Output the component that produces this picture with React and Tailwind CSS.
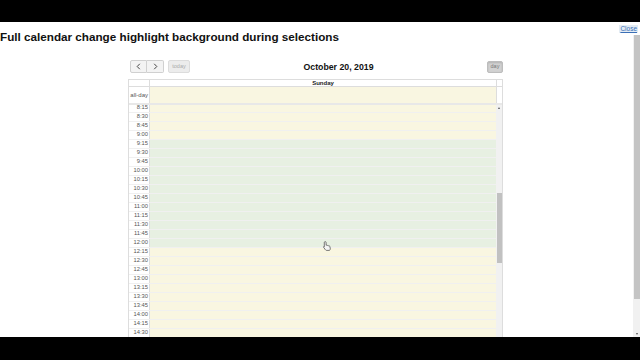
import React from "react";

const slots = Array.from({ length: 26 }, (_, i) => {
  const m = 8 * 60 + 15 + 15 * i;
  const h = Math.floor(m / 60);
  const mm = m % 60;
  return { label: `${h}:${String(mm).padStart(2, "0")}`, green: i >= 4 && i <= 15, first: i === 0 };
});

function Chevron({ dir }) {
  return (
    <svg width="5" height="7" viewBox="0 0 5 7" className="block">
      <path
        d={dir === "left" ? "M3.8 0.8 L1.2 3.5 L3.8 6.2" : "M1.2 0.8 L3.8 3.5 L1.2 6.2"}
        fill="none"
        stroke="#333"
        strokeWidth="0.9"
      />
    </svg>
  );
}

function Hand() {
  return (
    <svg width="8" height="10" viewBox="0 0 8 10">
      <path
        d="M2.2 0.6 C2.8 0.6 3.1 1 3.1 1.5 L3.1 4.3 L3.6 4.1 C4 4 4.4 4.2 4.5 4.5 C4.9 4.3 5.4 4.4 5.6 4.8 C6 4.6 6.6 4.8 6.8 5.3 L7.3 7.6 C7.4 8.4 7 9.4 6 9.4 L3.6 9.4 C3 9.4 2.6 9 2.2 8.5 L0.7 6.4 C0.4 6 0.5 5.4 1 5.3 C1.3 5.2 1.6 5.4 1.3 5.6 L1.3 1.5 C1.3 1 1.6 0.6 2.2 0.6 Z"
        fill="#f4f4f4"
        stroke="#444"
        strokeWidth="0.7"
      />
    </svg>
  );
}

export default function App() {
  return (
    <div className="w-[640px] h-[360px] flex flex-col bg-black overflow-hidden font-['Liberation_Sans',Arial,sans-serif]">
      <div className="h-[22px] shrink-0 bg-black" />
      <div className="h-[315px] shrink-0 bg-white flex flex-col overflow-hidden">
        <div className="h-[13px] shrink-0 flex justify-end items-start pt-[3px] pr-[2px]">
          <span className="text-[6.5px] leading-[8px] text-[#3b6fb6] underline bg-[#e3ecf4] px-[1px]">Close</span>
        </div>
        <div className="flex-1 flex flex-row min-h-0">
          <div className="flex-1 flex flex-col min-w-0">
            <h1 className="-mt-[5px] text-[11.7px] leading-[14px] font-bold text-[#111] whitespace-nowrap">
              Full calendar change highlight background during selections
            </h1>
            <div className="ml-[128px] w-[375px] mt-[16px] flex flex-col flex-1 min-h-0">
              {/* toolbar */}
              <div className="h-[13px] shrink-0 flex justify-between items-center">
                <div className="flex items-center gap-[4px] pl-[2px]">
                  <div className="flex">
                    <div className="w-[17px] h-[13px] flex items-center justify-center bg-[#f3f3f3] border border-[#d0d0d0] rounded-l-[2px]">
                      <Chevron dir="left" />
                    </div>
                    <div className="w-[17px] h-[13px] flex items-center justify-center bg-[#f3f3f3] border border-l-0 border-[#d0d0d0] rounded-r-[2px]">
                      <Chevron dir="right" />
                    </div>
                  </div>
                  <div className="w-[22px] h-[13px] flex items-center justify-center bg-[#ececec] border border-[#dcdcdc] rounded-[2px] text-[5.5px] text-[#aaa]">
                    today
                  </div>
                </div>
                <div className="text-[8.75px] font-bold text-[#111] leading-[10px]">October 20, 2019</div>
                <div className="w-[16px] h-[12px] flex items-center justify-center bg-[#d2d2d2] border border-[#bdbdbd] rounded-[2px] text-[5.5px] text-[#777] shadow-[inset_0_1px_2px_rgba(0,0,0,0.15)]">
                  day
                </div>
              </div>
              {/* header */}
              <div className="mt-[6px] h-[7px] shrink-0 flex border-t border-x border-[#ddd]">
                <div className="w-[21px] border-r border-[#ddd]" />
                <div className="flex-1 text-center text-[6px] leading-[6px] font-bold text-[#222]">Sunday</div>
                <div className="w-[6px] border-l border-[#ddd]" />
              </div>
              {/* all-day */}
              <div className="h-[17px] shrink-0 flex border-t border-x border-[#ddd]">
                <div className="w-[21px] border-r border-[#ddd] flex items-center justify-end pr-[1px] text-[6px] text-[#555]">
                  all-day
                </div>
                <div className="flex-1 bg-[#f9f6e1]" />
                <div className="w-[6px] border-l border-[#ddd]" />
              </div>
              {/* divider */}
              <div className="h-[2px] shrink-0 bg-[#e8e8e8] border-x border-[#ddd]" />
              {/* time grid */}
              <div className="flex-1 min-h-0 flex border-x border-[#ddd] relative">
                <div className="flex-1 min-w-0 flex flex-col">
                  {slots.map((s) => (
                    <div
                      key={s.label}
                      className={`${s.first ? "h-[7.5px]" : "h-[9px]"} shrink-0 flex border-b border-black/[0.06]`}
                    >
                      <div className="w-[21px] border-r border-[#ddd] flex items-end justify-end pr-[1px]">
                        <span className="text-[5.8px] leading-[9px] text-[#555] shrink-0">{s.label}</span>
                      </div>
                      <div className={`flex-1 ${s.green ? "bg-[#e7f0e2]" : "bg-[#f9f6e1]"}`} />
                    </div>
                  ))}
                </div>
                <div className="w-[6px] bg-[#f1f1f1] flex flex-col">
                  <div className="h-[6px] flex items-center justify-center">
                    <div className="w-0 h-0 border-x-[1.5px] border-x-transparent border-b-[2px] border-b-[#555]" />
                  </div>
                  <div className="mt-[82px] h-[70px] mx-[0.5px] bg-[#c1c1c1]" />
                </div>
                <div className="absolute left-[194px] top-[136px]">
                  <Hand />
                </div>
              </div>
            </div>
          </div>
          {/* page scrollbar */}
          <div className="w-[7px] bg-[#f1f1f1] flex flex-col">
            <div className="h-[264px] bg-[#c4c4c4] mx-[0.5px]" />
            <div className="flex-1" />
            <div className="h-[6px] flex items-center justify-center">
              <div className="w-0 h-0 border-x-[1.5px] border-x-transparent border-t-[2px] border-t-[#555]" />
            </div>
          </div>
        </div>
      </div>
      <div className="flex-1 bg-black" />
    </div>
  );
}
